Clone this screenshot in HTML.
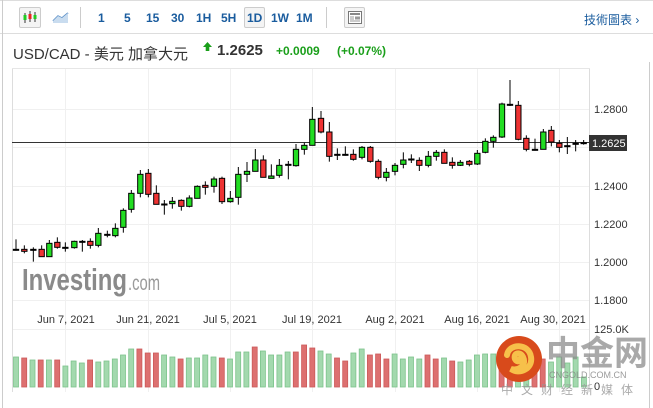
<!DOCTYPE html>
<html><head><meta charset="utf-8"><style>
*{margin:0;padding:0;box-sizing:border-box}
body{width:653px;height:408px;background:#fff;font-family:"Liberation Sans","Noto Sans CJK TC",sans-serif;position:relative;overflow:hidden}
.a{position:absolute;white-space:nowrap}
.tb{color:#1a5c9e;font-weight:bold;font-size:12px;top:11px}
</style></head><body>
<div class="a" style="left:0;top:0;width:653px;height:1px;background:#ddd"></div>
<div class="a" style="left:0;top:33px;width:653px;height:1px;background:#ddd"></div>
<div class="a" style="left:2px;top:0;width:1px;height:408px;background:#ccc"></div>
<div class="a" style="left:649px;top:62px;width:1px;height:346px;background:#ccc"></div>
<div class="a" style="left:19px;top:7px;width:22px;height:21px;border:1px solid #ccc;border-radius:2px;background:#f4f4f4"></div>
<svg class="a" style="left:19px;top:7px" width="22" height="21"><g stroke="#333" stroke-width="1"><line x1="6" y1="6" x2="6" y2="16"/><line x1="11" y1="4" x2="11" y2="15"/><line x1="16" y1="5" x2="16" y2="15"/></g><rect x="4.5" y="8" width="3" height="5" fill="#2c2"/><rect x="9.5" y="7" width="3" height="5" fill="#e22"/><rect x="14.5" y="8" width="3" height="4" fill="#2c2"/></svg>
<svg class="a" style="left:51px;top:9px" width="20" height="16"><path d="M2 12 L7 7 L11 9 L17 4" stroke="#5b8fc7" stroke-width="1.5" fill="none"/><path d="M2 12 L7 7 L11 9 L17 4 L17 14 L2 14Z" fill="#c9dcef"/></svg>
<div class="a" style="left:80px;top:7px;width:1px;height:21px;background:#ccc"></div>
<div class="a tb" style="left:98px">1</div>
<div class="a tb" style="left:124px">5</div>
<div class="a tb" style="left:146px">15</div>
<div class="a tb" style="left:171px">30</div>
<div class="a tb" style="left:196px">1H</div>
<div class="a tb" style="left:221px">5H</div>
<div class="a" style="left:244px;top:7px;width:21px;height:21px;border:1px solid #ccc;border-radius:2px;background:#f4f4f4"></div>
<div class="a tb" style="left:247px">1D</div>
<div class="a tb" style="left:271px">1W</div>
<div class="a tb" style="left:296px">1M</div>
<div class="a" style="left:326px;top:7px;width:1px;height:21px;background:#ccc"></div>
<div class="a" style="left:344px;top:7px;width:21px;height:21px;border:1px solid #ccc;border-radius:2px;background:#f4f4f4"></div>
<svg class="a" style="left:348px;top:11px" width="14" height="13"><rect x="0.5" y="0.5" width="13" height="12" fill="#fff" stroke="#777"/><rect x="2" y="2" width="10" height="2" fill="#888"/><g stroke="#999"><line x1="2" y1="6" x2="6" y2="6"/><line x1="2" y1="8" x2="6" y2="8"/><line x1="2" y1="10" x2="12" y2="10"/></g><rect x="7" y="5.5" width="5" height="3" fill="#999"/></svg>
<div class="a" style="left:584px;top:11px;font-size:12px;color:#1a5c9e">技術圖表 ›</div>
<div class="a" style="left:13px;top:43px;font-size:15px;color:#333">USD/CAD - 美元 加拿大元</div>
<svg class="a" style="left:203px;top:42px" width="9" height="9"><path d="M4.5 0 L9 5 L6.3 5 L6.3 9 L2.7 9 L2.7 5 L0 5Z" fill="#1a9f1a"/></svg>
<div class="a" style="left:217px;top:42px;font-size:15px;font-weight:bold;color:#333">1.2625</div>
<div class="a" style="left:276px;top:44px;font-size:12px;font-weight:bold;color:#1a9f1a">+0.0009</div>
<div class="a" style="left:337px;top:44px;font-size:12px;font-weight:bold;color:#1a9f1a">(+0.07%)</div>
<div class="a" style="left:12px;top:68px;width:578px;height:1px;background:#e6e6e6"></div>
<svg class="a" style="left:0;top:0" width="653" height="408">
<g stroke="#f0f0f0" stroke-width="1">
<line x1="12" y1="109.5" x2="589" y2="109.5"/><line x1="12" y1="147.5" x2="589" y2="147.5"/><line x1="12" y1="186.5" x2="589" y2="186.5"/><line x1="12" y1="224.5" x2="589" y2="224.5"/><line x1="12" y1="262.5" x2="589" y2="262.5"/><line x1="12" y1="300.5" x2="589" y2="300.5"/><line x1="12" y1="329.5" x2="589" y2="329.5"/>
<line x1="65.5" y1="69" x2="65.5" y2="392"/><line x1="148.5" y1="69" x2="148.5" y2="392"/><line x1="230.5" y1="69" x2="230.5" y2="392"/><line x1="312.5" y1="69" x2="312.5" y2="392"/><line x1="395.5" y1="69" x2="395.5" y2="392"/><line x1="477.5" y1="69" x2="477.5" y2="392"/><line x1="559.5" y1="69" x2="559.5" y2="392"/>
</g>
<line x1="12.5" y1="69" x2="12.5" y2="392" stroke="#ddd"/>
<line x1="589.5" y1="69" x2="589.5" y2="392" stroke="#ddd"/>
<text x="22" y="290" font-family="Liberation Sans" font-weight="bold" font-size="31" fill="#8a8a8a" textLength="105" lengthAdjust="spacingAndGlyphs">Investing</text>
<text x="128" y="290" font-family="Liberation Sans" font-size="21" fill="#9a9a9a" textLength="32" lengthAdjust="spacingAndGlyphs">.com</text>
<g font-family="Liberation Sans" font-size="11" fill="#333" text-anchor="middle">
<text x="66" y="323">Jun 7, 2021</text><text x="148" y="323">Jun 21, 2021</text><text x="230" y="323">Jul 5, 2021</text><text x="312" y="323">Jul 19, 2021</text><text x="395" y="323">Aug 2, 2021</text><text x="477" y="323">Aug 16, 2021</text><text x="553" y="323">Aug 30, 2021</text>
</g>
<g font-family="Liberation Sans" font-size="11" fill="#333">
<text x="594" y="113">1.2800</text><text x="594" y="190">1.2400</text><text x="594" y="228">1.2200</text><text x="594" y="266">1.2000</text><text x="594" y="304">1.1800</text><text x="594" y="333">125.0K</text><text x="594" y="390">0</text>
</g>
<line x1="12" y1="142.5" x2="589" y2="142.5" stroke="#333" stroke-width="1"/>
<rect x="589" y="135" width="38" height="16" fill="#333"/>
<text x="592" y="147" font-family="Liberation Sans" font-size="11" fill="#fff">1.2625</text>
<g stroke="#000" stroke-width="3" transform="translate(10,60) scale(0.33333)">
<line x1="18" y1="538" x2="18" y2="572"/><rect x="10" y="568" width="16" height="3" fill="#000"/>
<line x1="43" y1="556" x2="43" y2="580"/><rect x="35" y="568" width="16" height="6" fill="#e33"/>
<line x1="70" y1="562" x2="70" y2="605"/><rect x="62" y="568" width="16" height="3" fill="#000"/>
<line x1="95" y1="556" x2="95" y2="590"/><rect x="87" y="568" width="16" height="22" fill="#e33"/>
<line x1="118" y1="540" x2="118" y2="590"/><rect x="110" y="550" width="16" height="40" fill="#2d2"/>
<line x1="142" y1="532" x2="142" y2="566"/><rect x="134" y="547" width="16" height="15" fill="#e33"/>
<line x1="166" y1="547" x2="166" y2="575"/><rect x="158" y="562" width="16" height="3" fill="#000"/>
<line x1="193" y1="542" x2="193" y2="566"/><rect x="185" y="544" width="16" height="19" fill="#2d2"/>
<line x1="217" y1="540" x2="217" y2="575"/><rect x="209" y="544" width="16" height="3" fill="#000"/>
<line x1="241" y1="535" x2="241" y2="566"/><rect x="233" y="544" width="16" height="12" fill="#e33"/>
<line x1="265" y1="504" x2="265" y2="562"/><rect x="257" y="520" width="16" height="36" fill="#2d2"/>
<line x1="292" y1="512" x2="292" y2="532"/><rect x="284" y="523" width="16" height="3" fill="#000"/>
<line x1="316" y1="490" x2="316" y2="532"/><rect x="308" y="505" width="16" height="22" fill="#2d2"/>
<line x1="340" y1="445" x2="340" y2="518"/><rect x="332" y="451" width="16" height="51" fill="#2d2"/>
<line x1="364" y1="390" x2="364" y2="458"/><rect x="356" y="400" width="16" height="48" fill="#2d2"/>
<line x1="391" y1="330" x2="391" y2="412"/><rect x="383" y="343" width="16" height="57" fill="#2d2"/>
<line x1="415" y1="327" x2="415" y2="412"/><rect x="407" y="340" width="16" height="63" fill="#e33"/>
<line x1="439" y1="376" x2="439" y2="433"/><rect x="431" y="400" width="16" height="33" fill="#e33"/>
<line x1="463" y1="420" x2="463" y2="464"/><rect x="455" y="432" width="16" height="3" fill="#000"/>
<line x1="487" y1="411" x2="487" y2="446"/><rect x="479" y="424" width="16" height="7" fill="#2d2"/>
<line x1="514" y1="418" x2="514" y2="452"/><rect x="506" y="421" width="16" height="18" fill="#e33"/>
<line x1="538" y1="406" x2="538" y2="442"/><rect x="530" y="414" width="16" height="25" fill="#2d2"/>
<line x1="562" y1="376" x2="562" y2="415"/><rect x="554" y="379" width="16" height="36" fill="#2d2"/>
<line x1="586" y1="364" x2="586" y2="404"/><rect x="578" y="376" width="16" height="6" fill="#e33"/>
<line x1="612" y1="350" x2="612" y2="398"/><rect x="604" y="357" width="16" height="22" fill="#2d2"/>
<line x1="636" y1="350" x2="636" y2="432"/><rect x="628" y="355" width="16" height="70" fill="#e33"/>
<line x1="661" y1="393" x2="661" y2="428"/><rect x="653" y="415" width="16" height="10" fill="#2d2"/>
<line x1="685" y1="321" x2="685" y2="434"/><rect x="677" y="343" width="16" height="69" fill="#2d2"/>
<line x1="711" y1="306" x2="711" y2="366"/><rect x="703" y="334" width="16" height="9" fill="#2d2"/>
<line x1="736" y1="267" x2="736" y2="334"/><rect x="728" y="300" width="16" height="34" fill="#2d2"/>
<line x1="760" y1="286" x2="760" y2="352"/><rect x="752" y="300" width="16" height="52" fill="#e33"/>
<line x1="784" y1="313" x2="784" y2="355"/><rect x="776" y="348" width="16" height="7" fill="#2d2"/>
<line x1="808" y1="297" x2="808" y2="353"/><rect x="800" y="316" width="16" height="30" fill="#2d2"/>
<line x1="835" y1="303" x2="835" y2="358"/><rect x="827" y="313" width="16" height="3" fill="#000"/>
<line x1="858" y1="252" x2="858" y2="320"/><rect x="850" y="268" width="16" height="49" fill="#2d2"/>
<line x1="883" y1="248" x2="883" y2="284"/><rect x="875" y="256" width="16" height="12" fill="#2d2"/>
</g>
<g stroke="#000" stroke-width="3" transform="translate(300,60) scale(0.33333)">
<line x1="37" y1="141" x2="37" y2="256"/><rect x="29" y="178" width="16" height="78" fill="#2d2"/>
<line x1="63" y1="153" x2="63" y2="220"/><rect x="55" y="175" width="16" height="41" fill="#e33"/>
<line x1="88" y1="186" x2="88" y2="305"/><rect x="80" y="216" width="16" height="73" fill="#e33"/>
<line x1="112" y1="265" x2="112" y2="300"/><rect x="104" y="283" width="16" height="3" fill="#000"/>
<line x1="136" y1="259" x2="136" y2="287"/><rect x="128" y="283" width="16" height="3" fill="#000"/>
<line x1="160" y1="268" x2="160" y2="302"/><rect x="152" y="283" width="16" height="15" fill="#e33"/>
<line x1="186" y1="258" x2="186" y2="298"/><rect x="178" y="262" width="16" height="30" fill="#2d2"/>
<line x1="211" y1="258" x2="211" y2="308"/><rect x="203" y="262" width="16" height="42" fill="#e33"/>
<line x1="235" y1="298" x2="235" y2="358"/><rect x="227" y="304" width="16" height="48" fill="#e33"/>
<line x1="259" y1="324" x2="259" y2="364"/><rect x="251" y="337" width="16" height="15" fill="#2d2"/>
<line x1="285" y1="309" x2="285" y2="346"/><rect x="277" y="316" width="16" height="18" fill="#2d2"/>
<line x1="310" y1="277" x2="310" y2="325"/><rect x="302" y="300" width="16" height="13" fill="#2d2"/>
<line x1="334" y1="283" x2="334" y2="309"/><rect x="326" y="297" width="16" height="3" fill="#000"/>
<line x1="358" y1="292" x2="358" y2="333"/><rect x="350" y="301" width="16" height="15" fill="#e33"/>
<line x1="385" y1="273" x2="385" y2="322"/><rect x="377" y="289" width="16" height="27" fill="#2d2"/>
<line x1="409" y1="270" x2="409" y2="302"/><rect x="401" y="277" width="16" height="12" fill="#2d2"/>
<line x1="433" y1="268" x2="433" y2="310"/><rect x="425" y="277" width="16" height="33" fill="#e33"/>
<line x1="457" y1="292" x2="457" y2="326"/><rect x="449" y="307" width="16" height="9" fill="#e33"/>
<line x1="481" y1="300" x2="481" y2="318"/><rect x="473" y="307" width="16" height="9" fill="#2d2"/>
<line x1="508" y1="300" x2="508" y2="319"/><rect x="500" y="304" width="16" height="9" fill="#e33"/>
<line x1="532" y1="270" x2="532" y2="315"/><rect x="524" y="280" width="16" height="32" fill="#2d2"/>
<line x1="556" y1="235" x2="556" y2="280"/><rect x="548" y="244" width="16" height="33" fill="#2d2"/>
<line x1="580" y1="226" x2="580" y2="263"/><rect x="572" y="232" width="16" height="12" fill="#2d2"/>
<line x1="606" y1="128" x2="606" y2="234"/><rect x="598" y="132" width="16" height="99" fill="#2d2"/>
<line x1="630" y1="60" x2="630" y2="138"/><rect x="622" y="133" width="16" height="3" fill="#000"/>
<line x1="655" y1="123" x2="655" y2="241"/><rect x="647" y="136" width="16" height="102" fill="#e33"/>
<line x1="679" y1="226" x2="679" y2="274"/><rect x="671" y="235" width="16" height="33" fill="#e33"/>
<line x1="705" y1="236" x2="705" y2="272"/><rect x="697" y="268" width="16" height="3" fill="#000"/>
<line x1="730" y1="207" x2="730" y2="268"/><rect x="722" y="216" width="16" height="52" fill="#2d2"/>
<line x1="754" y1="198" x2="754" y2="259"/><rect x="746" y="211" width="16" height="35" fill="#e33"/>
<line x1="778" y1="240" x2="778" y2="277"/><rect x="770" y="250" width="16" height="12" fill="#e33"/>
<line x1="802" y1="231" x2="802" y2="282"/><rect x="794" y="257" width="16" height="3" fill="#000"/>
<line x1="827" y1="240" x2="827" y2="274"/><rect x="819" y="250" width="16" height="3" fill="#000"/>
<line x1="851" y1="240" x2="851" y2="254"/><rect x="843" y="248" width="16" height="3" fill="#000"/>
</g>
</svg>
<svg class="a" style="left:0;top:0" width="653" height="408" id="vs"></svg>
<script>
var h=[30,29,27,27,27,27,21,26,24,27,25,26,28,32,38,38,34,34,32,30,28,29,29,32,30,29,28,35,35,40,36,32,32,35,35,42,39,36,33,29,26,34,38,32,33,28,33,28,30,28,32,28,29,26,25,27,32,33,33,30,35,38,30,30,28,25,30,24,30,10];
var c="grgrgrgggrgggggrrrggrggggrgggrggggrrrggrrggrrrggggrrgrgggggrrggrrggg";
var s="";for(var i=0;i<70;i++){var x=16+i*8.23-2.5;var g=c[i]!="r";s+='<rect x="'+x.toFixed(1)+'" y="'+(387-h[i])+'" width="5" height="'+h[i]+'" fill="'+(g?"#a3d9ae":"#dd7070")+'" stroke="'+(g?"#7dc38c":"#cc5a5a")+'" stroke-width="0.8"/>';}
document.getElementById("vs").innerHTML=s;
</script>
<svg class="a" style="left:495px;top:335px" width="50" height="50"><circle cx="24" cy="24" r="23" fill="#d84a1b"/><path d="M12 20 C14 8 34 8 36 22 C38 34 24 40 16 34 C24 36 32 30 28 22 C25 16 18 18 20 24 C22 28 26 26 25 24" stroke="#f7c04a" stroke-width="6" fill="none" stroke-linecap="round"/></svg>
<div class="a" style="left:546px;top:331px;font-size:34px;font-weight:bold;color:rgba(140,140,140,0.75);font-family:'Noto Sans CJK SC',sans-serif;line-height:40px">中金网</div>
<div class="a" style="left:549px;top:370px;font-size:9px;color:rgba(130,130,130,0.8)">CNGOLD.COM.CN</div>
<div class="a" style="left:501px;top:381px;font-size:12px;color:rgba(150,150,150,0.8);letter-spacing:8px;font-family:'Noto Sans CJK SC',sans-serif">中文财经新媒体</div>
</body></html>
